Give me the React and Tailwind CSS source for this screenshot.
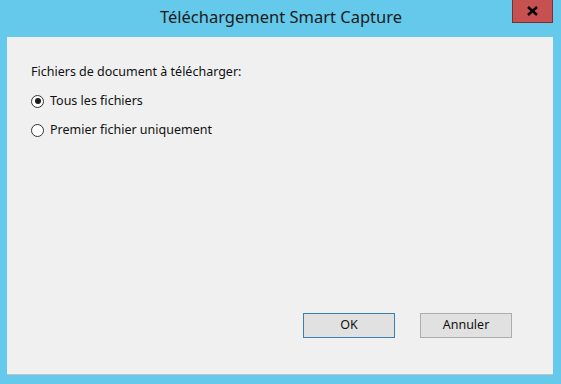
const Radio = ({ checked, label }) => (
  <label className="flex items-center gap-[6px] h-[16px]">
    <span className="w-[13px] h-[13px] rounded-full border border-[#333] bg-white flex items-center justify-center">
      {checked && <span className="w-[6px] h-[6px] rounded-full bg-[#1a1a1a]" />}
    </span>
    <span>{label}</span>
  </label>
);

export default function App() {
  return (
    <div
      className="w-[561px] h-[384px] bg-[#64c9ea] flex flex-col text-[#111]"
      style={{ fontFamily: '"Noto Sans", "Open Sans", sans-serif' }}
    >
      <div className="h-[37px] flex items-start relative">
        <div className="flex-1 text-center text-[16.5px] pt-[5px] pl-[1px] text-[#1b1b1b]">Téléchargement Smart Capture</div>
        <button className="absolute right-[8px] top-0 w-[41px] h-[23px] bg-[#c75050] border border-[#7a3030] border-t-0 flex items-center justify-center">
          <svg width="11" height="10" viewBox="0 0 11 10">
            <path d="M1 1 L10 9 M10 1 L1 9" stroke="#000" strokeWidth="2.4" />
          </svg>
        </button>
      </div>
      <div className="flex-1 ml-[7px] mr-[8px] mb-[9px] bg-[#f0f0f0] border-b border-[#b8c4c8] flex flex-col text-[12.5px]">
        <div className="pl-[24px] pt-[27px] flex flex-col gap-[13px]">
          <div className="leading-[16px]">Fichiers de document à télécharger:</div>
          <Radio checked label="Tous les fichiers" />
          <Radio label="Premier fichier uniquement" />
        </div>
        <div className="mt-auto mb-[36px] flex justify-end gap-[25px] pr-[41px]">
          <button className="w-[92px] h-[25px] bg-[#e1e1e1] border border-[#3c7fb1]">OK</button>
          <button className="w-[92px] h-[25px] bg-[#e1e1e1] border border-[#adadad]">Annuler</button>
        </div>
      </div>
    </div>
  );
}
